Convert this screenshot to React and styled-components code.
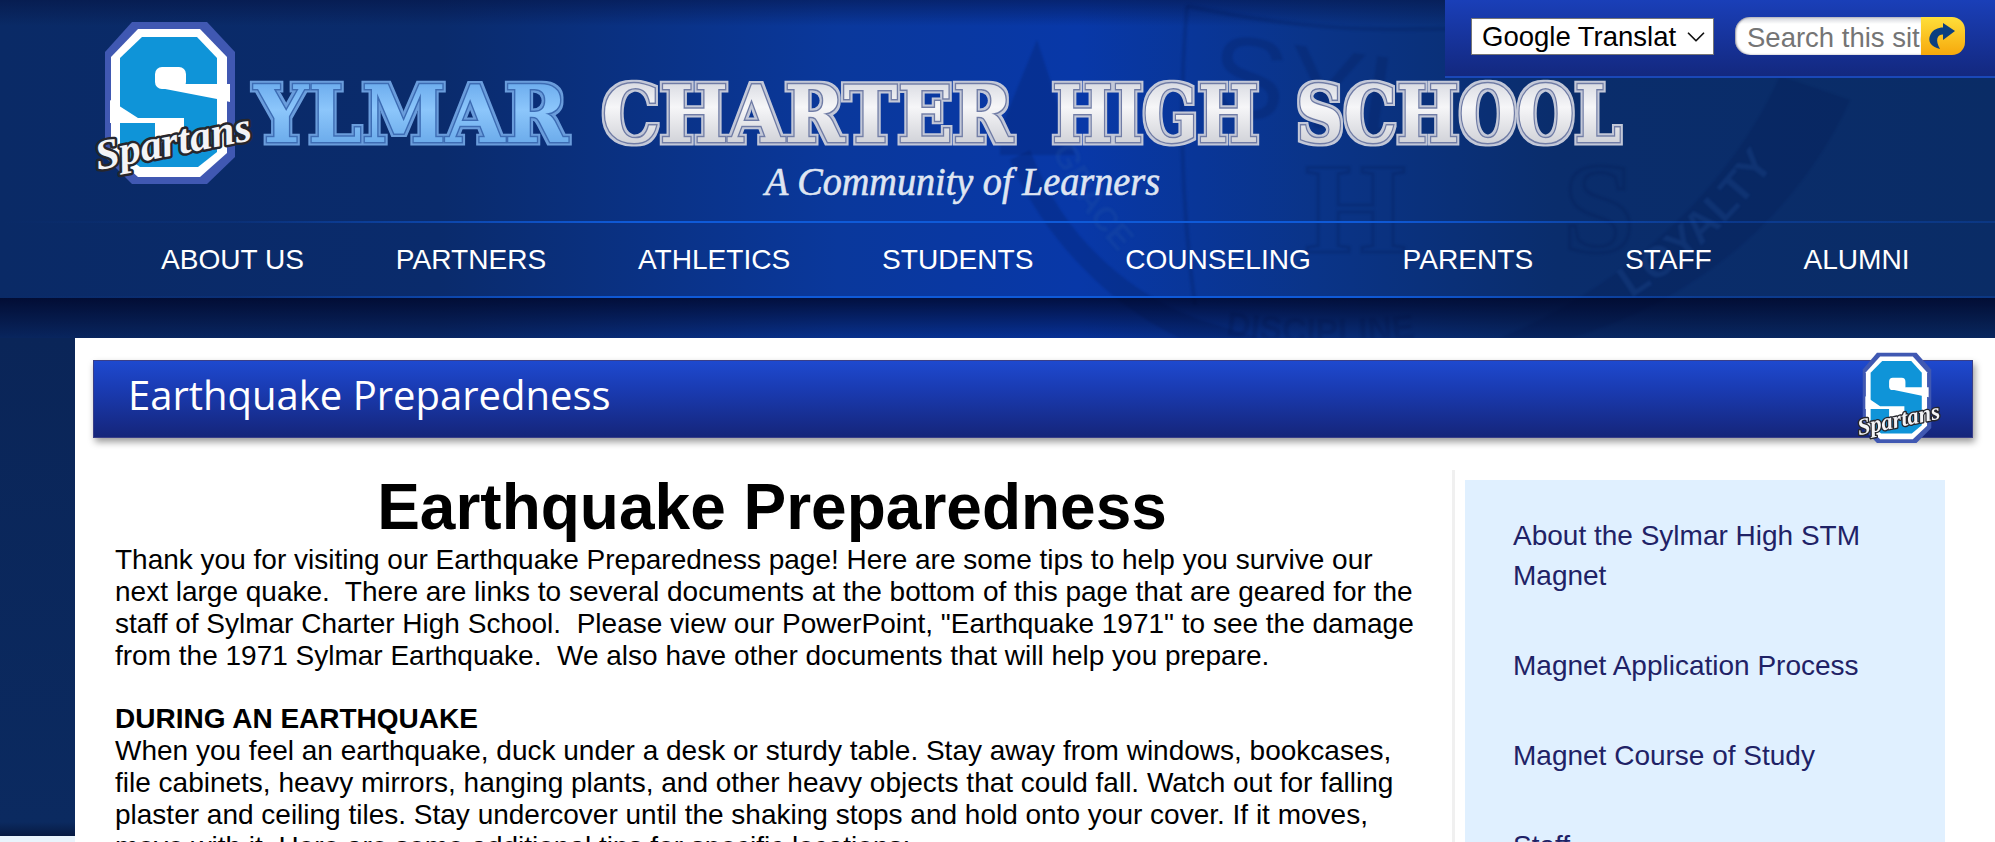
import React from "react";
import styled, { createGlobalStyle } from "styled-components";
import { ChevronDown } from "lucide-react";

const GlobalStyle = createGlobalStyle`
	html, body {
		margin: 0;
		height: 842px;
		overflow: hidden;
		background: #fff;
		font-family: "Liberation Sans", Arial, sans-serif;
	}
`;

const Header = styled.header`
	position: relative;
	height: 338px;
	overflow: hidden;
	background: linear-gradient(
		90deg,
		#0a2a66 0%,
		#0a2b6c 22%,
		#0a389c 42%,
		#0838a8 54%,
		#0a3488 66%,
		#0a2d6c 78%,
		#0a2c66 100%
	);
	&::before {
		content: "";
		position: absolute;
		inset: 0 0 auto 0;
		height: 26px;
		background: linear-gradient(rgba(4, 16, 60, 0.5), rgba(4, 16, 60, 0));
	}
`;

const Watermark = styled.svg`
	position: absolute;
	left: 1000px;
	top: 0;
	width: 995px;
	height: 338px;
	filter: blur(1px);
`;

const Brand = styled.div`
	position: relative;
	height: 221px;
	svg {
		display: block;
	}
`;

const NavBar = styled.nav`
	position: relative;
	box-sizing: border-box;
	height: 77px;
	display: flex;
	align-items: center;
	gap: 91.7px;
	padding-left: 161px;
	border-style: solid;
	border-width: 2px 0;
	border-image: linear-gradient(
			90deg,
			rgba(16, 88, 216, 0) 0%,
			rgba(16, 88, 216, 0.12) 12%,
			#0f5ad8 32%,
			#0f5ad8 68%,
			rgba(16, 88, 216, 0.35) 85%,
			rgba(16, 88, 216, 0.25) 100%
		)
		1;
`;

const NavLink = styled.a`
	color: #fff;
	font-size: 28.1px;
	white-space: nowrap;
`;

const ShadowBand = styled.div`
	position: relative;
	height: 41px;
	background: linear-gradient(rgba(0, 6, 40, 0.8), rgba(0, 6, 40, 0.12));
`;

const ToolPanel = styled.div`
	position: absolute;
	top: 0;
	right: 0;
	box-sizing: border-box;
	width: 550px;
	height: 78px;
	display: flex;
	align-items: flex-start;
	gap: 21px;
	padding: 17px 0 0 26px;
	background: linear-gradient(#1a3fb8, #13287f);
	border-bottom: 2px solid #1a48b8;
`;

const SelectWrap = styled.div`
	position: relative;
	margin-top: 1px;
	color: #111;
	svg {
		position: absolute;
		right: 3px;
		top: 4px;
		pointer-events: none;
	}
`;

const TranslateSelect = styled.select`
	appearance: none;
	display: block;
	box-sizing: border-box;
	width: 243px;
	height: 37px;
	padding: 0 36px 0 10px;
	border: 1px solid #767676;
	border-radius: 0;
	background: #fff;
	color: #000;
	font-family: "Liberation Sans", Arial, sans-serif;
	font-size: 27.5px;
`;

const SearchBox = styled.form`
	display: flex;
	height: 38px;
	margin: 0;
`;

const SearchInput = styled.input`
	box-sizing: border-box;
	width: 186px;
	height: 38px;
	padding: 3px 0 0 12px;
	border: 0;
	border-radius: 15px 0 0 15px;
	background: linear-gradient(#cfd1d8 0, #fff 7px);
	box-shadow: inset 1px 0 2px rgba(70, 70, 90, 0.6);
	font-family: "Liberation Sans", Arial, sans-serif;
	font-size: 27.5px;
	outline: none;
	&::placeholder {
		color: #757575;
		opacity: 1;
	}
`;

const SearchButton = styled.button`
	width: 44px;
	height: 38px;
	padding: 0;
	border: 0;
	border-radius: 0 13px 13px 0;
	background: linear-gradient(#ffdf3a, #f6a80c);
	svg {
		display: block;
	}
`;

const Page = styled.div`
	box-sizing: border-box;
	height: 504px;
	padding-left: 75px;
	background: linear-gradient(#0a2558 0, #0b2a60 484px, #071a42 498px, #e9f4fc 498px);
`;

const ContentPanel = styled.main`
	box-sizing: border-box;
	height: 504px;
	padding: 22px 22px 0 18px;
	overflow: hidden;
	background: #fff;
`;

const TitleBar = styled.div`
	position: relative;
	box-sizing: border-box;
	height: 78px;
	display: flex;
	align-items: center;
	padding: 0 0 9px 34px;
	border: 1px solid #3a3f88;
	background: linear-gradient(#1e49cf, #1a3cb4 35%, #15257a);
	box-shadow: 2px 4px 7px rgba(0, 0, 0, 0.4);
`;

const TitleText = styled.h2`
	margin: 0;
	color: #fff;
	font-family: "Open Sans", "Noto Sans", sans-serif;
	font-weight: 400;
	font-size: 40px;
`;

const TitleBadge = styled.div`
	position: absolute;
	right: 17px;
	top: -15px;
	filter: blur(0.5px);
	svg {
		display: block;
	}
`;

const Columns = styled.div`
	display: flex;
	align-items: flex-start;
	margin: 32px 0 0 22px;
`;

const Article = styled.article`
	box-sizing: border-box;
	width: 1340px;
	height: 400px;
	padding-right: 23px;
	border-right: 3px solid #f0f0f0;
	color: #000;
	font-size: 28px;
	line-height: 32px;
`;

const PageHeading = styled.h1`
	margin: 0;
	text-align: center;
	font-size: 64px;
	line-height: 74px;
	font-weight: 700;
`;

const Paragraph = styled.p`
	max-width: 1303px;
	margin: 0 0 31px;
`;

const SectionHeading = styled.strong`
	display: block;
`;

const SideMenu = styled.ul`
	box-sizing: border-box;
	width: 480px;
	height: 400px;
	margin: 10px 0 0 10px;
	padding: 11px 48px 0;
	list-style: none;
	background: #e0f0ff;
`;

const SideItem = styled.li`
	padding: 25px 0;
	color: #1f2266;
	font-size: 28px;
	line-height: 40px;
`;

const navItems = [
	"ABOUT US",
	"PARTNERS",
	"ATHLETICS",
	"STUDENTS",
	"COUNSELING",
	"PARENTS",
	"STAFF",
	"ALUMNI",
];

const sideItems = [
	"About the Sylmar High STM Magnet",
	"Magnet Application Process",
	"Magnet Course of Study",
	"Staff",
];

const titleWords = [
	{ text: "YLMAR", x: 254, length: 314, kind: "blue" },
	{ text: "CHARTER", x: 602, length: 411, kind: "silver" },
	{ text: "HIGH", x: 1052, length: 207, kind: "silver" },
	{ text: "SCHOOL", x: 1296, length: 325, kind: "silver" },
];

function Emblem({ x, y, width, height }) {
	return (
		<svg
			x={x}
			y={y}
			width={width}
			height={height}
			viewBox="0 0 220 190"
			preserveAspectRatio="none"
		>
			<polygon
				points="72,12 147,12 175,42 175,147 147,174 72,174 45,147 45,42"
				fill="#4058b2"
			/>
			<polygon
				points="78,19 140,19 167,47 167,143 140,167 78,167 51,143 51,47"
				fill="#fff"
			/>
			<polygon
				points="82,27 137,27 157,48 157,142 138,157 80,157 60,142 60,48"
				fill="#0f94d8"
			/>
			<rect x="95" y="57" width="31" height="22" rx="7" fill="#fff" />
			<polygon points="122,74 170,74 170,92 157,89 100,78" fill="#fff" />
			<polygon points="50,90 78,108 124,108 124,133 95,133 95,113 50,113" fill="#fff" />
			<text
				x="38"
				y="160"
				transform="rotate(-11 38 160)"
				textLength="158"
				lengthAdjust="spacingAndGlyphs"
				fontFamily="'Liberation Serif', serif"
				fontStyle="italic"
				fontWeight="700"
				fontSize="42"
				fill="#f4f4f6"
				stroke="#26262c"
				strokeWidth="5"
				strokeLinejoin="round"
				paintOrder="stroke"
			>
				Spartans
			</text>
		</svg>
	);
}

function BrandArt() {
	return (
		<svg width="1640" height="221" viewBox="0 0 1640 221">
			<defs>
				<linearGradient id="silverFill" x1="0" y1="0" x2="0" y2="1">
					<stop offset="0" stopColor="#c9ccd6" />
					<stop offset="0.42" stopColor="#f6f6f8" />
					<stop offset="1" stopColor="#bfc1c9" />
				</linearGradient>
				<linearGradient id="blueFill" x1="0" y1="0" x2="0" y2="1">
					<stop offset="0" stopColor="#5c9fe6" />
					<stop offset="0.45" stopColor="#8cc6fb" />
					<stop offset="1" stopColor="#5a9de2" />
				</linearGradient>
				<filter id="silverEdge" x="-5%" y="-10%" width="110%" height="120%">
					<feMorphology in="SourceAlpha" operator="dilate" radius="2" result="grown" />
					<feFlood floodColor="#c3c8d8" />
					<feComposite in2="grown" operator="in" result="edge" />
					<feMerge>
						<feMergeNode in="edge" />
						<feMergeNode in="SourceGraphic" />
					</feMerge>
				</filter>
				<filter id="blueEdge" x="-5%" y="-10%" width="110%" height="120%">
					<feMorphology in="SourceAlpha" operator="dilate" radius="2" result="grown" />
					<feFlood floodColor="#6a9ddc" />
					<feComposite in2="grown" operator="in" result="edge" />
					<feMerge>
						<feMergeNode in="edge" />
						<feMergeNode in="SourceGraphic" />
					</feMerge>
				</filter>
			</defs>
			{titleWords.map(word => (
				<text
					key={word.text}
					x={word.x}
					y="142"
					textLength={word.length}
					lengthAdjust="spacingAndGlyphs"
					fontFamily="'DejaVu Serif', serif"
					fontWeight="700"
					fontSize="79"
					fill={word.kind === "blue" ? "url(#blueFill)" : "url(#silverFill)"}
					stroke={word.kind === "blue" ? "#3c6cb4" : "#6f7ca6"}
					strokeWidth="3"
					strokeLinejoin="miter"
					paintOrder="stroke"
					filter={word.kind === "blue" ? "url(#blueEdge)" : "url(#silverEdge)"}
				>
					{word.text}
				</text>
			))}
			<text
				x="765"
				y="195"
				textLength="395"
				lengthAdjust="spacingAndGlyphs"
				fontFamily="'Liberation Serif', serif"
				fontStyle="italic"
				fontSize="41"
				fill="#dfe5f2"
				stroke="#dfe5f2"
				strokeWidth="0.6"
			>
				A Community of Learners
			</text>
			<Emblem x={60} y={10} width={220} height={190} />
		</svg>
	);
}

function Crest() {
	const ink = "rgba(2, 18, 74, 0.2)";
	const paper = "rgba(40, 90, 170, 0.22)";
	return (
		<Watermark viewBox="1000 0 995 338">
			<defs>
				<path id="loyaltyArc" d="M1590 322 C1690 270 1770 190 1822 85" />
				<path id="graceArc" d="M1052 150 C1080 215 1125 270 1185 305" />
				<path id="lowerArc" d="M1225 335 C1300 345 1360 345 1440 335" />
			</defs>
			<path d="M1037 40 L990 155 L1075 155 Z" fill={ink} />
			<path d="M1187 6 C1290 28 1370 34 1510 26" fill="none" stroke={ink} strokeWidth="4" />
			<path d="M1187 6 C1178 110 1182 210 1195 305" fill="none" stroke={ink} strokeWidth="4" />
			<path
				d="M1780 76 L1850 100 C1800 210 1700 300 1570 338 L1500 338 C1620 290 1730 190 1780 76 Z"
				fill={ink}
			/>
			<path
				d="M1030 150 C1060 230 1120 290 1200 320 L1260 338 L1180 338 C1100 300 1040 230 1010 160 Z"
				fill={ink}
			/>
			<text
				x="1205"
				y="112"
				transform="rotate(8 1205 112)"
				fontFamily="'Liberation Sans', sans-serif"
				fontSize="115"
				fill={ink}
			>
				SYL
			</text>
			<text
				x="1305"
				y="252"
				textLength="330"
				fontFamily="'Liberation Serif', serif"
				fontWeight="700"
				fontSize="130"
				fill="none"
				stroke={ink}
				strokeWidth="3"
			>
				HS
			</text>
			<text fontFamily="'Liberation Sans', sans-serif" fontWeight="700" fontSize="44" fill={paper}>
				<textPath href="#loyaltyArc" startOffset="14%">LOYALTY</textPath>
			</text>
			<text fontFamily="'Liberation Sans', sans-serif" fontWeight="700" fontSize="34" fill={paper}>
				<textPath href="#graceArc">GRACE</textPath>
			</text>
			<text fontFamily="'Liberation Sans', sans-serif" fontWeight="700" fontSize="34" fill={ink}>
				<textPath href="#lowerArc">DISCIPLINE</textPath>
			</text>
		</Watermark>
	);
}

function GoArrow() {
	return (
		<svg width="44" height="38" viewBox="0 0 44 38">
			<path
				d="M22 6 L34 14 L22 23 L22 17.5 C16 17.5 14 23 19 32 C10 30 6 24 9.5 17.5 C12 12.5 17 10.5 22 10.5 Z"
				fill="#0b3f80"
			/>
		</svg>
	);
}

export default function App() {
	return (
		<>
			<GlobalStyle />
			<Header>
				<Crest />
				<Brand>
					<BrandArt />
				</Brand>
				<NavBar>
					{navItems.map(item => (
						<NavLink key={item}>{item}</NavLink>
					))}
				</NavBar>
				<ShadowBand />
				<ToolPanel>
					<SelectWrap>
						<TranslateSelect defaultValue="translate">
							<option value="translate">Google Translate</option>
						</TranslateSelect>
						<ChevronDown size={30} strokeWidth={1.4} />
					</SelectWrap>
					<SearchBox>
						<SearchInput placeholder="Search this site" />
						<SearchButton type="button">
							<GoArrow />
						</SearchButton>
					</SearchBox>
				</ToolPanel>
			</Header>
			<Page>
				<ContentPanel>
					<TitleBar>
						<TitleText>Earthquake Preparedness</TitleText>
						<TitleBadge>
							<svg width="116" height="106" viewBox="0 0 116 106">
								<Emblem x={0} y={0} width={116} height={106} />
							</svg>
						</TitleBadge>
					</TitleBar>
					<Columns>
						<Article>
							<PageHeading>Earthquake Preparedness</PageHeading>
							<Paragraph>
								Thank you for visiting our Earthquake Preparedness page! Here are some tips to
								help you survive our next large quake.&nbsp; There are links to several documents
								at the bottom of this page that are geared for the staff of Sylmar Charter High
								School.&nbsp; Please view our PowerPoint, "Earthquake 1971" to see the damage from
								the 1971 Sylmar Earthquake.&nbsp; We also have other documents that will help you
								prepare.
							</Paragraph>
							<SectionHeading>DURING AN EARTHQUAKE</SectionHeading>
							<Paragraph>
								When you feel an earthquake, duck under a desk or sturdy table. Stay away from
								windows, bookcases, file cabinets, heavy mirrors, hanging plants, and other heavy
								objects that could fall. Watch out for falling plaster and ceiling tiles. Stay
								undercover until the shaking stops and hold onto your cover. If it moves, move
								with it. Here are some additional tips for specific locations:
							</Paragraph>
						</Article>
						<SideMenu>
							{sideItems.map(item => (
								<SideItem key={item}>{item}</SideItem>
							))}
						</SideMenu>
					</Columns>
				</ContentPanel>
			</Page>
		</>
	);
}
